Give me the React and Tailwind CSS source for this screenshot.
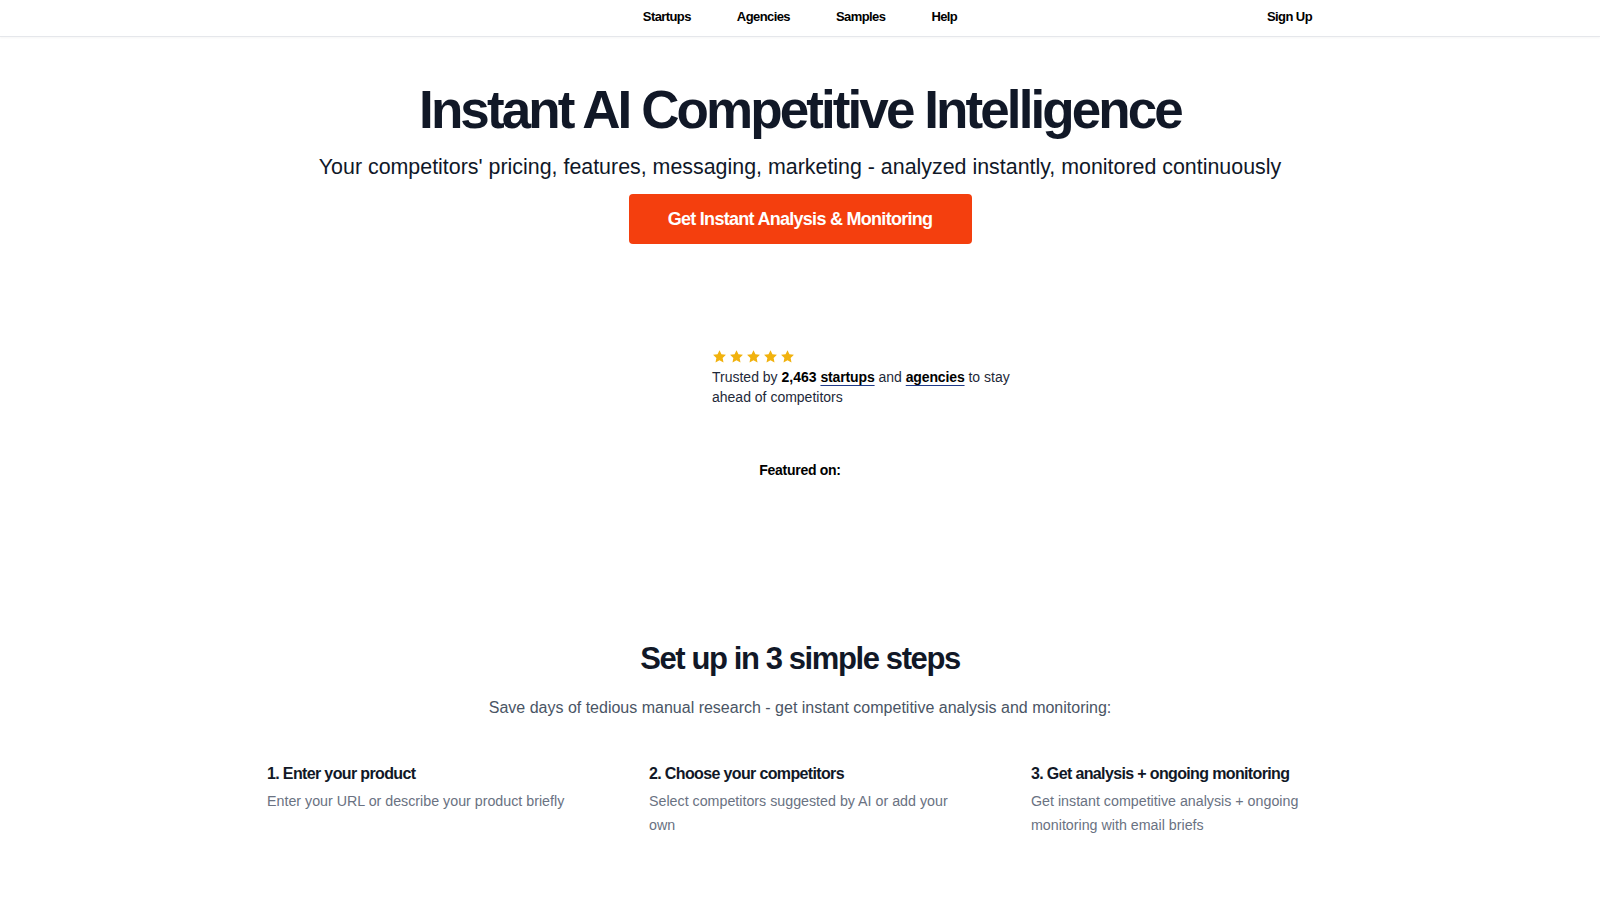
import React from "react";

function Star() {
  return (
    <svg viewBox="0 0 24 24" className="h-[15px] w-[15px]" fill="#f1b20e">
      <path d="M12 1.8l3.1 6.6 7.2.9-5.3 5 1.4 7.1L12 17.9l-6.4 3.5 1.4-7.1-5.3-5 7.2-.9z" />
    </svg>
  );
}

const steps = [
  {
    title: "1. Enter your product",
    desc: "Enter your URL or describe your product briefly",
  },
  {
    title: "2. Choose your competitors",
    desc: "Select competitors suggested by AI or add your own",
  },
  {
    title: "3. Get analysis + ongoing monitoring",
    desc: "Get instant competitive analysis + ongoing monitoring with email briefs",
  },
];

export default function App() {
  return (
    <div className="min-h-[900px] bg-white font-['Liberation_Sans',Arial,sans-serif] text-[#111827]">
      <header className="border-b border-gray-200 shadow-[0_1px_2px_rgba(0,0,0,0.04)]">
        <div className="mx-auto flex h-9 max-w-5xl items-center pb-[2px] text-[13px] font-bold tracking-[-0.045em] text-black">
          <div className="flex-1" />
          <nav className="flex gap-[46px]">
            <a href="#">Startups</a>
            <a href="#">Agencies</a>
            <a href="#">Samples</a>
            <a href="#">Help</a>
          </nav>
          <div className="flex flex-1 justify-end">
            <a href="#">Sign Up</a>
          </div>
        </div>
      </header>

      <main>
        <section className="flex flex-col items-center text-center">
          <h1 className="mt-[46px] text-[53px] leading-none font-bold tracking-[-0.055em] text-[#111827]">
            Instant AI Competitive Intelligence
          </h1>
          <p className="mt-[17px] text-[21.4px] leading-7 text-gray-900">
            Your competitors' pricing, features, messaging, marketing - analyzed instantly, monitored continuously
          </p>
          <button className="mt-[13px] h-[50px] w-[343px] rounded bg-[#f43f0e] text-[18px] font-bold tracking-[-0.04em] text-white">
            Get Instant Analysis &amp; Monitoring
          </button>
        </section>

        <section className="mt-[105px] flex justify-center gap-3">
          <div className="w-[112px]" />
          <div className="w-[300px]">
            <div className="flex h-[15px] gap-[2px]">
              <Star />
              <Star />
              <Star />
              <Star />
              <Star />
            </div>
            <p className="mt-[3px] text-sm leading-5 text-gray-800">
              Trusted by <span className="font-bold text-black">2,463</span>{" "}
              <a href="#" className="font-semibold tracking-[-0.01em] text-black underline decoration-[#1e3a8a] underline-offset-[3px]">
                startups
              </a>{" "}
              and{" "}
              <a href="#" className="font-semibold tracking-[-0.01em] text-black underline decoration-[#1e3a8a] underline-offset-[3px]">
                agencies
              </a>{" "}
              to stay ahead of competitors
            </p>
          </div>
        </section>

        <p className="mt-[53px] text-center text-sm leading-5 font-bold tracking-[-0.02em] text-black">Featured on:</p>

        <section className="mt-[159px] flex flex-col items-center">
          <h2 className="text-[31px] leading-10 font-bold tracking-[-0.045em] text-[#111827]">
            Set up in 3 simple steps
          </h2>
          <p className="mt-[17px] text-base leading-6 text-gray-600">
            Save days of tedious manual research - get instant competitive analysis and monitoring:
          </p>
          <div className="mt-[42px] grid w-[1066px] grid-cols-3 gap-x-20">
            {steps.map((s) => (
              <div key={s.title}>
                <h3 className="text-base leading-6 font-bold tracking-[-0.04em] text-[#111827]">{s.title}</h3>
                <p className="mt-1 text-[14.25px] leading-[23.5px] text-gray-500">{s.desc}</p>
              </div>
            ))}
          </div>
        </section>
      </main>
    </div>
  );
}
